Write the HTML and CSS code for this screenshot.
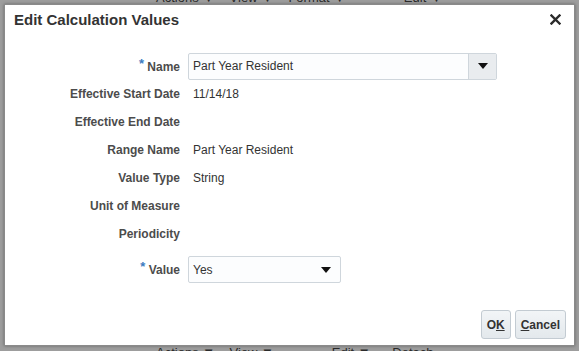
FILE: index.html
```html
<!DOCTYPE html>
<html lang="en">
<head>
    <meta charset="UTF-8">
    <title>Edit Calculation Values</title>
    <link rel="stylesheet" href="styles.css">
</head>
<body>
    <div class="backdrop">
        <div class="toolbar toolbar-top">Actions &#9660; &nbsp;&nbsp; View &#9660; &nbsp;&nbsp; Format &#9660; &nbsp;&nbsp;&nbsp;&nbsp;&nbsp;&nbsp;&nbsp;&nbsp;&nbsp;&nbsp;&nbsp;&nbsp;&nbsp;&nbsp; Edit &#9660;</div>
        <div class="toolbar toolbar-bottom">Actions &#9660; &nbsp;&nbsp; View &#9660; &nbsp;&nbsp;&nbsp;&nbsp;&nbsp;&nbsp;&nbsp;&nbsp;&nbsp;&nbsp;&nbsp;&nbsp;&nbsp;&nbsp; Edit &#9660; &nbsp;&nbsp;&nbsp;&nbsp; Detach</div>
    </div>

    <div class="dialog">
        <div class="dialog-header">
            <h1>Edit Calculation Values</h1>
            <button class="close-btn" title="Close">
                <svg width="11" height="11" viewBox="0 0 11 11"><path d="M1.5 1.5 L9.5 9.5 M9.5 1.5 L1.5 9.5" stroke="#2b2b2b" stroke-width="2.4" stroke-linecap="square"/></svg>
            </button>
        </div>

        <div class="form">
            <div class="label"><span class="req">*</span> Name</div>
            <div class="field">
                <div class="combo combo-name">
                    <span class="combo-text">Part Year Resident</span>
                    <span class="combo-btn"><span class="tri"></span></span>
                </div>
            </div>

            <div class="label">Effective Start Date</div>
            <div class="value">11/14/18</div>

            <div class="label">Effective End Date</div>
            <div class="value"></div>

            <div class="label">Range Name</div>
            <div class="value">Part Year Resident</div>

            <div class="label">Value Type</div>
            <div class="value">String</div>

            <div class="label">Unit of Measure</div>
            <div class="value"></div>

            <div class="label">Periodicity</div>
            <div class="value"></div>

            <div class="label label-gap"><span class="req">*</span> Value</div>
            <div class="field label-gap">
                <div class="combo combo-value">
                    <span class="combo-text">Yes</span>
                    <span class="tri"></span>
                </div>
            </div>
        </div>

        <div class="dialog-footer">
            <button class="btn">O<u>K</u></button>
            <button class="btn"><u>C</u>ancel</button>
        </div>
    </div>
</body>
</html>
```

FILE: styles.css
```css
body {
    margin: 0;
    padding: 0;
    width: 579px;
    height: 351px;
    overflow: hidden;
    background: #9d9d9d;
    font-family: "Liberation Sans", Arial, sans-serif;
    font-size: 12px;
    color: #333;
    position: relative;
}
.backdrop {
    height: 351px;
    display: flex;
    flex-direction: column;
    justify-content: space-between;
}
.toolbar {
    padding-left: 156px;
    font-size: 13px;
    color: #2a2a2a;
    white-space: nowrap;
    line-height: 14px;
}
.toolbar-top {
    margin-top: -9px;
}
.toolbar-bottom {
    margin-bottom: -9px;
}
.dialog {
    position: absolute;
    left: 4px;
    top: 4px;
    width: 569px;
    height: 340px;
    background: #fff;
    border: 1px solid #8a8a8a;
    box-shadow: 0 0 3px rgba(0, 0, 0, 0.35);
    display: flex;
    flex-direction: column;
}
.dialog-header {
    display: flex;
    justify-content: space-between;
    align-items: center;
    height: 29px;
    padding: 0 13px 0 9px;
}
.dialog-header h1 {
    margin: 0;
    font-size: 15px;
    font-weight: bold;
    color: #333;
}
.close-btn {
    border: none;
    background: none;
    padding: 0;
    width: 11px;
    height: 11px;
    display: flex;
    cursor: pointer;
}
.form {
    margin-top: 18px;
    display: grid;
    grid-template-columns: 175px 1fr;
    grid-auto-rows: 28px;
    column-gap: 8px;
    align-items: center;
}
.label {
    text-align: right;
    font-weight: bold;
    color: #4c4c4c;
}
.req {
    color: #3d7bbf;
    font-size: 13px;
    position: relative;
    top: -3px;
}
.value {
    padding-left: 5px;
    color: #333;
}
.label-gap {
    margin-top: 15px;
}
.combo {
    box-sizing: border-box;
    height: 27px;
    border: 1px solid #cfd6dc;
    border-radius: 2px;
    background: #fcfdfe;
    display: flex;
    align-items: center;
}
.combo-text {
    flex: 1;
    padding-left: 4px;
}
.combo-name {
    width: 309px;
}
.combo-value {
    width: 153px;
    padding-right: 9px;
}
.combo-btn {
    width: 27px;
    height: 100%;
    border-left: 1px solid #cfd6dc;
    background: #e9ecef;
    display: flex;
    align-items: center;
    justify-content: center;
}
.tri {
    width: 0;
    height: 0;
    border-left: 5px solid transparent;
    border-right: 5px solid transparent;
    border-top: 6px solid #111;
}
.dialog-footer {
    margin-top: auto;
    display: flex;
    justify-content: flex-end;
    gap: 4px;
    padding: 0 8px 6px 0;
}
.btn {
    height: 29px;
    padding: 0 5px;
    border: 1px solid #c3cbd2;
    border-radius: 3px;
    background: linear-gradient(#f2f5f7, #e3e8ec);
    font-family: "Liberation Sans", Arial, sans-serif;
    font-size: 12px;
    font-weight: bold;
    color: #333;
    cursor: pointer;
}
```
